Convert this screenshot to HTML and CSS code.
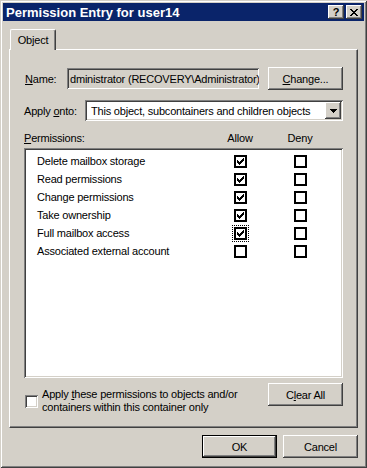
FILE: index.html
```html
<!DOCTYPE html>
<html lang="en">
<head>
    <meta charset="UTF-8">
    <title>Permission Entry for user14</title>
    <link rel="stylesheet" href="styles.css">
</head>
<body>
    <div class="window">
        <div class="titlebar">
            <span class="title">Permission Entry for user14</span>
            <div class="title-buttons">
                <button class="tbtn help">?</button>
                <button class="tbtn">
                    <svg width="8" height="7" viewBox="0 0 8 7"><path d="M0 0h2v1H0zM6 0h2v1H6zM1 1h2v1H1zM5 1h2v1H5zM2 2h4v1H2zM3 3h2v1H3zM2 4h4v1H2zM1 5h2v1H1zM5 5h2v1H5zM0 6h2v1H0zM6 6h2v1H6z" fill="#000"/></svg>
                </button>
            </div>
        </div>

        <div class="content">
            <div class="tabs">
                <div class="tab">Object</div>
            </div>
            <div class="panel">
                <div class="name-row">
                    <span class="name-label"><u>N</u>ame:</span>
                    <div class="field readonly">dministrator (RECOVERY\Administrator)</div>
                    <button class="btn"><u>C</u>hange...</button>
                </div>

                <div class="apply-row">
                    <span class="apply-label">Apply <u>o</u>nto:</span>
                    <div class="field combo">
                        <span class="combo-text">This object, subcontainers and children objects</span>
                        <span class="drop-btn">
                            <svg width="7" height="4" viewBox="0 0 7 4"><path d="M0 0h7v1H0zM1 1h5v1H1zM2 2h3v1H2zM3 3h1v1H3z" fill="#000"/></svg>
                        </span>
                    </div>
                </div>

                <div class="perm-head">
                    <span class="perm-label"><u>P</u>ermissions:</span>
                    <span class="col">Allow</span>
                    <span class="col">Deny</span>
                </div>

                <div class="list">
                    <div class="perm-row">
                        <span class="perm-name">Delete mailbox storage</span>
                        <span class="cb"><svg width="7" height="7" viewBox="0 0 7 7"><path d="M6 0h1v1H6zM5 1h2v1H5zM0 2h1v1H0zM4 2h3v1H4zM0 3h2v1H0zM3 3h3v1H3zM0 4h5v1H0zM1 5h3v1H1zM2 6h1v1H2z" fill="#000"/></svg></span>
                        <span class="cb deny"></span>
                    </div>
                    <div class="perm-row">
                        <span class="perm-name">Read permissions</span>
                        <span class="cb"><svg width="7" height="7" viewBox="0 0 7 7"><path d="M6 0h1v1H6zM5 1h2v1H5zM0 2h1v1H0zM4 2h3v1H4zM0 3h2v1H0zM3 3h3v1H3zM0 4h5v1H0zM1 5h3v1H1zM2 6h1v1H2z" fill="#000"/></svg></span>
                        <span class="cb deny"></span>
                    </div>
                    <div class="perm-row">
                        <span class="perm-name">Change permissions</span>
                        <span class="cb"><svg width="7" height="7" viewBox="0 0 7 7"><path d="M6 0h1v1H6zM5 1h2v1H5zM0 2h1v1H0zM4 2h3v1H4zM0 3h2v1H0zM3 3h3v1H3zM0 4h5v1H0zM1 5h3v1H1zM2 6h1v1H2z" fill="#000"/></svg></span>
                        <span class="cb deny"></span>
                    </div>
                    <div class="perm-row">
                        <span class="perm-name">Take ownership</span>
                        <span class="cb"><svg width="7" height="7" viewBox="0 0 7 7"><path d="M6 0h1v1H6zM5 1h2v1H5zM0 2h1v1H0zM4 2h3v1H4zM0 3h2v1H0zM3 3h3v1H3zM0 4h5v1H0zM1 5h3v1H1zM2 6h1v1H2z" fill="#000"/></svg></span>
                        <span class="cb deny"></span>
                    </div>
                    <div class="perm-row">
                        <span class="perm-name">Full mailbox access</span>
                        <span class="cb focused"><svg width="7" height="7" viewBox="0 0 7 7"><path d="M6 0h1v1H6zM5 1h2v1H5zM0 2h1v1H0zM4 2h3v1H4zM0 3h2v1H0zM3 3h3v1H3zM0 4h5v1H0zM1 5h3v1H1zM2 6h1v1H2z" fill="#000"/></svg></span>
                        <span class="cb deny"></span>
                    </div>
                    <div class="perm-row">
                        <span class="perm-name">Associated external account</span>
                        <span class="cb"></span>
                        <span class="cb deny"></span>
                    </div>
                </div>

                <div class="bottom-row">
                    <span class="check3d"></span>
                    <span class="bottom-text">Apply <u>t</u>hese permissions to objects and/or<br>containers within this container only</span>
                    <button class="btn">C<u>l</u>ear All</button>
                </div>
            </div>

            <div class="footer">
                <button class="btn default">OK</button>
                <button class="btn">Cancel</button>
            </div>
        </div>
    </div>
</body>
</html>
```

FILE: styles.css
```css
* {
    box-sizing: border-box;
}
body {
    margin: 0;
    background-color: #d4d0c8;
    font-family: Tahoma, "Liberation Sans", Arial, sans-serif;
    font-size: 11px;
    letter-spacing: -0.2px;
    color: #000;
}
u {
    text-decoration: underline;
    text-underline-offset: 1px;
}
.window {
    width: 367px;
    height: 468px;
    padding: 3px;
    background-color: #d4d0c8;
    box-shadow: inset 1px 1px #d4d0c8, inset -1px -1px #404040,
                inset 2px 2px #fff, inset -2px -2px #808080;
    display: flex;
    flex-direction: column;
}
.titlebar {
    height: 18px;
    background-color: #0a246a;
    display: flex;
    align-items: center;
    justify-content: space-between;
    padding: 0 2px 0 3px;
}
.title {
    color: #fff;
    font-weight: bold;
    font-size: 13px;
    letter-spacing: 0;
}
.title-buttons {
    display: flex;
    gap: 2px;
}
.tbtn {
    width: 16px;
    height: 14px;
    border: none;
    padding: 0;
    background-color: #d4d0c8;
    box-shadow: inset -1px -1px #404040, inset 1px 1px #fff,
                inset -2px -2px #808080;
    display: flex;
    align-items: center;
    justify-content: center;
    font-family: inherit;
}
.tbtn.help {
    font-weight: bold;
    font-size: 11px;
    line-height: 1;
}
.content {
    flex: 1;
    display: flex;
    flex-direction: column;
    padding: 8px 6px 7px 6px;
}
.tabs {
    display: flex;
    padding-left: 1px;
}
.tab {
    position: relative;
    z-index: 1;
    width: 46px;
    height: 21px;
    margin-bottom: -1px;
    background-color: #d4d0c8;
    border-top: 1px solid #fff;
    border-left: 1px solid #fff;
    border-right: 1px solid #404040;
    border-radius: 2px 2px 0 0;
    box-shadow: inset -1px 0 #808080;
    display: flex;
    align-items: center;
    justify-content: center;
    padding-bottom: 1px;
}
.panel {
    height: 379px;
    border-top: 1px solid #fff;
    border-left: 1px solid #fff;
    border-right: 1px solid #404040;
    border-bottom: 1px solid #404040;
    box-shadow: inset -1px -1px #808080;
    padding: 17px 14px 0 14px;
    display: flex;
    flex-direction: column;
}
.btn {
    width: 75px;
    height: 23px;
    border: none;
    padding: 0;
    background-color: #d4d0c8;
    font-family: inherit;
    font-size: 11px;
    letter-spacing: -0.2px;
    color: #000;
    box-shadow: inset -1px -1px #404040, inset 1px 1px #fff,
                inset -2px -2px #808080, inset 2px 2px #d4d0c8;
}
.btn.default {
    border: 1px solid #000;
}
.field {
    height: 21px;
    box-shadow: inset 1px 1px #808080, inset -1px -1px #fff,
                inset 2px 2px #404040, inset -2px -2px #d4d0c8;
    display: flex;
    align-items: center;
    white-space: nowrap;
    overflow: hidden;
}
.name-row {
    display: flex;
    align-items: center;
    height: 23px;
}
.name-label {
    width: 43px;
    padding-left: 1px;
}
.field.readonly {
    width: 192px;
    background-color: #d4d0c8;
    padding-left: 3px;
}
.name-row .btn {
    margin-left: auto;
}
.apply-row {
    display: flex;
    align-items: center;
    margin-top: 10px;
    height: 21px;
}
.apply-label {
    width: 61px;
}
.field.combo {
    flex: 1;
    background-color: #fff;
    padding: 2px;
}
.combo-text {
    flex: 1;
    padding-left: 4px;
}
.drop-btn {
    width: 16px;
    height: 17px;
    background-color: #d4d0c8;
    box-shadow: inset -1px -1px #404040, inset 1px 1px #fff,
                inset -2px -2px #808080;
    display: flex;
    align-items: center;
    justify-content: center;
}
.perm-head {
    display: flex;
    align-items: center;
    margin-top: 10px;
    height: 14px;
    padding-right: 13px;
}
.perm-label {
    flex: 1;
}
.col {
    width: 60px;
    text-align: center;
}
.list {
    margin-top: 3px;
    height: 230px;
    background-color: #fff;
    padding: 4px 2px 2px 2px;
    box-shadow: inset 1px 1px #808080, inset -1px -1px #fff,
                inset 2px 2px #404040, inset -2px -2px #d4d0c8;
}
.perm-row {
    display: flex;
    align-items: center;
    height: 18px;
    padding-left: 11px;
}
.perm-name {
    width: 197px;
}
.cb {
    width: 13px;
    height: 13px;
    border: 2px solid #000;
    background-color: #fff;
    display: flex;
    align-items: center;
    justify-content: center;
}
.cb svg {
    margin-top: 1px;
}
.cb.deny {
    margin-left: 47px;
}
.cb.focused {
    outline: 1px dotted #000;
    outline-offset: 1px;
}
.bottom-row {
    display: flex;
    align-items: flex-start;
    margin-top: 5px;
}
.check3d {
    width: 13px;
    height: 13px;
    margin: 12px 0 0 1px;
    background-color: #fff;
    box-shadow: inset 1px 1px #808080, inset -1px -1px #fff,
                inset 2px 2px #404040, inset -2px -2px #d4d0c8;
}
.bottom-text {
    margin: 5px 0 0 4px;
    line-height: 13px;
}
.bottom-row .btn {
    margin-left: auto;
}
.footer {
    display: flex;
    justify-content: flex-end;
    gap: 6px;
    margin-top: 7px;
}
```
